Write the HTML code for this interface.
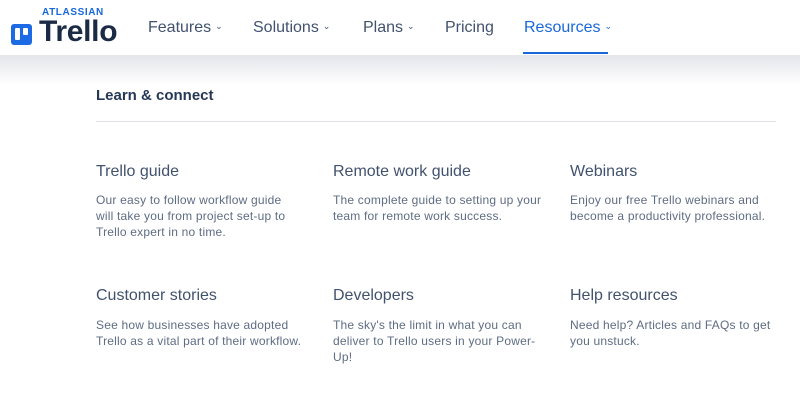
<!DOCTYPE html>
<html><head><meta charset="utf-8"><style>
*{margin:0;padding:0;box-sizing:border-box}
body{width:800px;height:408px;overflow:hidden;background:#fff;font-family:"Liberation Sans",sans-serif;position:relative}
.hdr{position:absolute;left:0;top:0;width:800px;height:55px;background:#fff;z-index:2}
.shadow{position:absolute;left:0;top:55px;width:800px;height:30px;background:linear-gradient(#e4e5ea,#fff)}
.logo-a{position:absolute;left:42px;top:7px;font-size:10px;font-weight:bold;color:#1868db;letter-spacing:0.6px}
.logo-i{position:absolute;left:11px;top:24px;width:21px;height:21px;background:#1d6ae5;border-radius:3px}
.logo-i:before{content:"";position:absolute;left:4px;top:4px;width:5px;height:12px;background:#fff;border-radius:1px}
.logo-i:after{content:"";position:absolute;left:12px;top:4px;width:5px;height:7px;background:#fff;border-radius:1px}
.logo-t{position:absolute;left:39px;top:15px;font-size:30px;font-weight:bold;color:#1c2b45;letter-spacing:-0.3px}
.nav{position:absolute;top:19px;font-size:16px;color:#42526e}
.nav small{font-size:9px;margin-left:4px;position:relative;top:-3px}
.act{color:#1868db}
.ul{position:absolute;left:523px;top:52px;width:85px;height:2px;background:#1868db}
.lc{position:absolute;left:96px;top:87px;font-size:15px;font-weight:bold;color:#253858}
.hr{position:absolute;left:96px;top:121px;width:680px;height:1px;background:#dfe1e6}
.t{position:absolute;font-size:16px;color:#42526e}
.d{position:absolute;font-size:12px;line-height:16px;color:#5e6c84;white-space:nowrap;letter-spacing:0.2px}
</style></head><body>
<div class="shadow"></div>
<div class="hdr">
<div class="logo-a">ATLASSIAN</div>
<div class="logo-i"></div>
<div class="logo-t">Trello</div>
<div class="nav" style="left:148px">Features<small>⌄</small></div>
<div class="nav" style="left:253px">Solutions<small>⌄</small></div>
<div class="nav" style="left:363px">Plans<small>⌄</small></div>
<div class="nav" style="left:445px">Pricing</div>
<div class="nav act" style="left:524px">Resources<small>⌄</small></div>
<div class="ul"></div>
</div>
<div class="lc">Learn &amp; connect</div>
<div class="hr"></div>
<div class="t" style="left:96px;top:163px">Trello guide</div>
<div class="d" style="left:96px;top:192px">Our easy to follow workflow guide<br>will take you from project set-up to<br>Trello expert in no time.</div>
<div class="t" style="left:333px;top:163px">Remote work guide</div>
<div class="d" style="left:333px;top:192px">The complete guide to setting up your<br>team for remote work success.</div>
<div class="t" style="left:570px;top:163px">Webinars</div>
<div class="d" style="left:570px;top:192px">Enjoy our free Trello webinars and<br>become a productivity professional.</div>
<div class="t" style="left:96px;top:287px">Customer stories</div>
<div class="d" style="left:96px;top:317px">See how businesses have adopted<br>Trello as a vital part of their workflow.</div>
<div class="t" style="left:333px;top:287px">Developers</div>
<div class="d" style="left:333px;top:317px">The sky's the limit in what you can<br>deliver to Trello users in your Power-<br>Up!</div>
<div class="t" style="left:570px;top:287px">Help resources</div>
<div class="d" style="left:570px;top:317px">Need help? Articles and FAQs to get<br>you unstuck.</div>
</body></html>
